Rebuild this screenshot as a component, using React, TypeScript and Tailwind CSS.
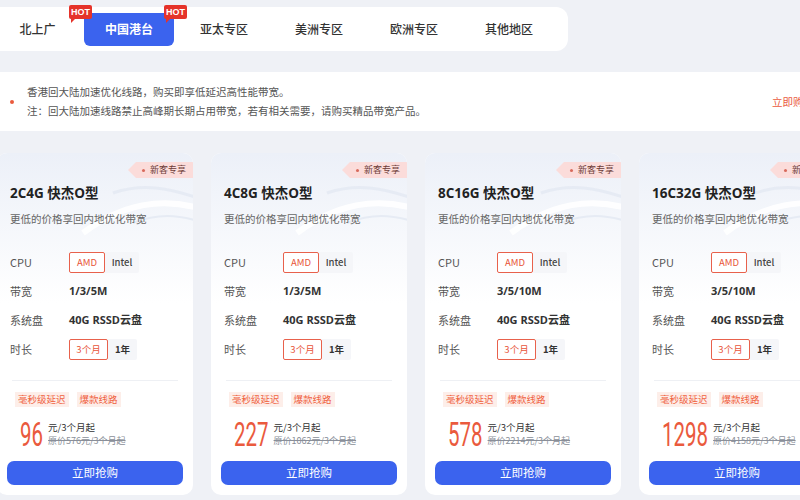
import React from "react";

const font = { fontFamily: '"Noto Sans CJK SC", "Noto Sans", sans-serif' };

const tabs = ["北上广", "中国港台", "亚太专区", "美洲专区", "欧洲专区", "其他地区"];

const cards = [
  { title: "2C4G 快杰O型", bw: "1/3/5M", price: "96", orig: "原价576元/3个月起" },
  { title: "4C8G 快杰O型", bw: "1/3/5M", price: "227", orig: "原价1062元/3个月起" },
  { title: "8C16G 快杰O型", bw: "3/5/10M", price: "578", orig: "原价2214元/3个月起" },
  { title: "16C32G 快杰O型", bw: "3/5/10M", price: "1298", orig: "原价4158元/3个月起" },
];

function Hot() {
  return (
    <div className="absolute top-[-8px] right-[-13px] z-10">
      <div className="relative bg-[#e5332a] text-white text-[9px] font-bold leading-[14px] h-[14px] w-[23px] text-center rounded-[2px]" style={{ fontFamily: '"Liberation Sans", Arial, sans-serif' }}>
        HOT
        <div className="absolute left-[2px] bottom-[-4px] w-0 h-0 border-l-[4px] border-l-[#e5332a] border-b-[4px] border-b-transparent" />
      </div>
    </div>
  );
}

function Card({ c }: { c: (typeof cards)[number] }) {
  return (
    <div className="relative w-[196px] h-[342px] shrink-0 rounded-[10px] bg-white overflow-hidden">
      <div className="absolute inset-x-0 top-0 h-[150px] bg-gradient-to-b from-[#ecf0f8] to-white" />
      <svg className="absolute right-0 top-[10px]" width="120" height="80" viewBox="0 0 120 80" fill="none">
        <path d="M10 70 C 50 40, 90 35, 125 45" stroke="#ffffff" strokeWidth="6" opacity="0.9" />
        <path d="M40 30 C 70 20, 95 25, 125 35" stroke="#e3e8f3" strokeWidth="3" opacity="0.8" />
        <path d="M60 60 C 85 50, 105 52, 125 58" stroke="#e6ebf4" strokeWidth="2" />
      </svg>
      <div
        className="absolute right-0 top-[9px] h-[16px] pl-[14px] pr-[7px] bg-[#fbdcda] flex items-center gap-[5px] text-[9px] text-[#6b3a36]"
        style={{ clipPath: "polygon(0 50%, 8px 0, 100% 0, 100% 100%, 8px 100%)" }}
      >
        <span className="w-[3px] h-[3px] rounded-full bg-[#d86a5c]" />
        新客专享
      </div>
      <div className="relative flex flex-col px-[13px]">
        <div className="mt-[30px] h-[20px] leading-[20px] text-[13.5px] font-bold text-[#222]" style={{ fontFamily: '"Open Sans", "Noto Sans CJK SC", sans-serif' }}>
          {c.title}
        </div>
        <div className="mt-[8px] h-[16px] leading-[16px] text-[10.5px] text-[#666]">更低的价格享回内地优化带宽</div>
        <div className="mt-[21px] flex flex-col">
          <div className="h-[29px] flex items-center">
            <span className="w-[59px] text-[11px] text-[#555]">CPU</span>
            <div className="flex h-[21px]">
              <span className="w-[36px] flex items-center justify-center border border-[#e8614c] rounded-[2px] text-[9.5px] text-[#e8553a] bg-white">AMD</span>
              <span className="w-[34px] flex items-center justify-center bg-[#f5f6f9] text-[9.5px] text-[#444] font-medium rounded-r-[2px]">Intel</span>
            </div>
          </div>
          <div className="h-[29px] flex items-center">
            <span className="w-[59px] text-[11px] text-[#555]">带宽</span>
            <span className="text-[11px] font-bold text-[#333]" style={{ fontFamily: '"Open Sans", "Noto Sans CJK SC", sans-serif' }}>{c.bw}</span>
          </div>
          <div className="h-[29px] flex items-center">
            <span className="w-[59px] text-[11px] text-[#555]">系统盘</span>
            <span className="text-[11px] font-bold text-[#333]" style={{ fontFamily: '"Open Sans", "Noto Sans CJK SC", sans-serif' }}>40G RSSD云盘</span>
          </div>
          <div className="h-[29px] flex items-center">
            <span className="w-[59px] text-[11px] text-[#555]">时长</span>
            <div className="flex h-[21px]">
              <span className="w-[39px] flex items-center justify-center border border-[#e8614c] rounded-[2px] text-[9.5px] text-[#e8553a] bg-white">3个月</span>
              <span className="w-[29px] flex items-center justify-center bg-[#f5f6f9] text-[9.5px] text-[#333] font-bold rounded-r-[2px]">1年</span>
            </div>
          </div>
        </div>
        <div className="mt-[16px] mx-[2px] h-px bg-[#eef0f4]" />
        <div className="mt-[11px] flex gap-[8px] pl-[5px]">
          <span className="h-[15px] px-[3px] leading-[15px] bg-[#fdeee9] text-[#f0623f] text-[9.5px]">毫秒级延迟</span>
          <span className="h-[15px] px-[3px] leading-[15px] bg-[#fdeee9] text-[#f0623f] text-[9.5px]">爆款线路</span>
        </div>
        <div className="mt-[14px] h-[26px] flex items-center pl-[10px]">
          <span className="inline-block text-[#ea5a3d] leading-none" style={{ fontFamily: 'Roboto, "Liberation Sans", sans-serif' }}>
            <span className="inline-block text-[33px] scale-x-[0.62] origin-left" style={{ marginRight: `${-c.price.length * 18.5 * 0.38}px` }}>{c.price}</span>
          </span>
          <div className="ml-[5px] flex flex-col justify-center">
            <span className="text-[9.5px] leading-[13px] text-[#333]">元/3个月起</span>
            <span className="text-[9px] leading-[13px] text-[#8a8f99] line-through">{c.orig}</span>
          </div>
        </div>
        <button className="mt-[14px] -mx-[3px] h-[24px] rounded-[7px] bg-[#3b63ee] text-white text-[11.5px]">立即抢购</button>
      </div>
    </div>
  );
}

export default function App() {
  return (
    <div className="w-[800px] h-[500px] overflow-hidden bg-[#eff1f6]" style={font}>
      <div className="pt-[7px] ml-[-12px]">
        <div className="w-[580px] h-[44px] bg-white rounded-[12px] flex items-center pl-[1px] gap-[5px]">
          {tabs.map((t, i) => (
            <div
              key={t}
              className={
                "relative w-[90px] h-[33px] flex items-center justify-center text-[12px] rounded-[6px] " +
                (i === 1 ? "bg-[#3b63ee] text-white font-bold" : "text-[#333] font-medium") +
                (i === 0 ? " pl-[7px]" : "")
              }
            >
              {t}
              {i < 2 && <Hot />}
            </div>
          ))}
        </div>
      </div>
      <div className="mt-[21px] ml-[-12px] w-[830px] h-[59px] bg-white rounded-[10px] flex items-center">
        <span className="ml-[22px] w-[4px] h-[4px] rounded-full bg-[#ea5a3d]" />
        <div className="ml-[13px] flex flex-col gap-[3px] text-[10.5px] text-[#555] leading-[16px]">
          <span>香港回大陆加速优化线路，购买即享低延迟高性能带宽。</span>
          <span>注：回大陆加速线路禁止高峰期长期占用带宽，若有相关需要，请购买精品带宽产品。</span>
        </div>
        <span className="ml-auto mr-[2px] text-[10.5px] text-[#ea5a3d] w-[44px]">立即购买</span>
      </div>
      <div className="mt-[22px] ml-[-3px] flex gap-[18px]">
        {cards.map((c) => (
          <Card key={c.title} c={c} />
        ))}
      </div>
    </div>
  );
}
